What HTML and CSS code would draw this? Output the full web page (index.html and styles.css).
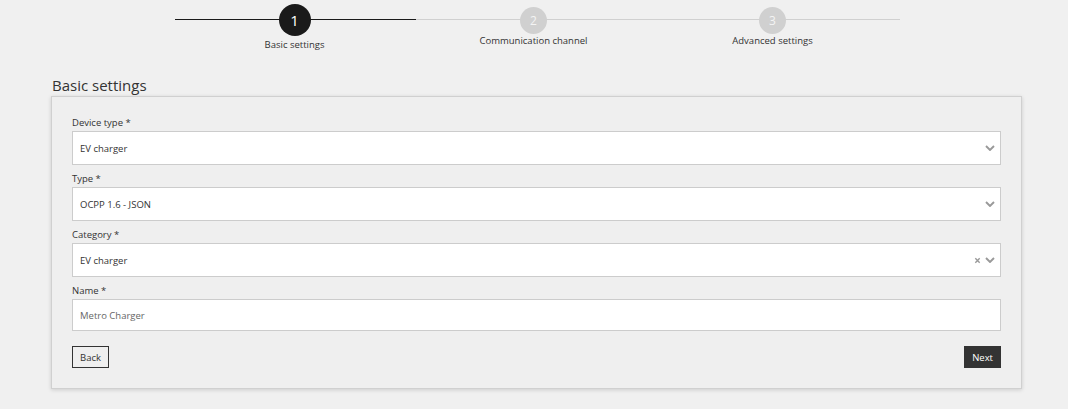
FILE: index.html
```html
<!DOCTYPE html>
<html>
<head>
<meta charset="utf-8">
<link rel="stylesheet" href="styles.css">
</head>
<body>
<div class="stepper">
  <div class="step done">
    <div class="line"></div>
    <div class="circle">1</div>
    <div class="step-label">Basic settings</div>
  </div>
  <div class="step">
    <div class="line"></div>
    <div class="circle">2</div>
    <div class="step-label">Communication channel</div>
  </div>
  <div class="step last">
    <div class="line"></div>
    <div class="circle">3</div>
    <div class="step-label">Advanced settings</div>
  </div>
</div>
<h2 class="title">Basic settings</h2>
<div class="card">
  <div class="field">
    <label>Device type *</label>
    <div class="input select"><span>EV charger</span><span class="icons"><svg class="chev" viewBox="0 0 10 6"><path d="M1 1 L5 5 L9 1" /></svg></span></div>
  </div>
  <div class="field">
    <label>Type *</label>
    <div class="input select"><span>OCPP 1.6 - JSON</span><span class="icons"><svg class="chev" viewBox="0 0 10 6"><path d="M1 1 L5 5 L9 1" /></svg></span></div>
  </div>
  <div class="field">
    <label>Category *</label>
    <div class="input select"><span>EV charger</span><span class="icons"><svg class="clear" viewBox="0 0 8 8"><path d="M1.5 1.5 L6.5 6.5 M6.5 1.5 L1.5 6.5" /></svg><svg class="chev" viewBox="0 0 10 6"><path d="M1 1 L5 5 L9 1" /></svg></span></div>
  </div>
  <div class="field">
    <label>Name *</label>
    <div class="input text"><span>Metro Charger</span></div>
  </div>
  <div class="actions">
    <button class="btn back">Back</button>
    <button class="btn next">Next</button>
  </div>
</div>
</body>
</html>
```
FILE: styles.css
```css
* { box-sizing: border-box; }
body {
  margin: 0;
  background: #f0f0f0;
  font-family: "Open Sans", "DejaVu Sans", sans-serif;
  color: #333;
  height: 409px;
  overflow: hidden;
}
.stepper {
  display: flex;
  margin: 4px 0 0 175px;
}
.step {
  width: 239px;
  position: relative;
  display: flex;
  flex-direction: column;
  align-items: center;
}
.step .line {
  position: absolute;
  left: 0; right: 0;
  top: 15px;
  height: 1px;
  background: #d0d0d0;
}
.step.last .line { right: -8px; }
.step.done .line { background: #1a1a1a; right: -2px; z-index: 1; }
.circle {
  position: relative;
  z-index: 2;
  width: 27px;
  height: 27px;
  border-radius: 50%;
  background: #d0d0d0;
  color: #f4f4f4;
  font-size: 12px;
  display: flex;
  align-items: center;
  justify-content: center;
  margin-top: 3px;
}
.step.done .circle {
  width: 32px;
  height: 32px;
  margin-top: 0;
  background: #1a1a1a;
  color: #fff;
  font-size: 15px;
}
.step-label {
  font-size: 9.5px;
  margin-top: 2px;
  color: #333;
}
.step:not(.done) .step-label { margin-top: 0; }
.title {
  font-weight: 400;
  font-size: 15px;
  margin: 24px 0 0 52px;
  color: #333;
  line-height: 21px;
}
.card {
  margin: 0 46px 0 51px;
  border: 1px solid #d0d0d0;
  box-shadow: 0 1px 4px rgba(0,0,0,0.15);
  padding: 20px 20px 18px 20px;
  background: #efefef;
  height: 293px;
}
.field { margin-bottom: 8px; }
.field label {
  display: block;
  font-size: 9.5px;
  line-height: 12px;
  margin-bottom: 2px;
  color: #333;
}
.input {
  height: 34px;
  background: #fff;
  border: 1px solid #ccc;
  display: flex;
  align-items: center;
  justify-content: space-between;
  padding: 0 5px 0 7px;
  font-size: 9.5px;
  color: #333;
}
.input.text { height: 32px; color: #666; }
.icons { display: flex; align-items: center; gap: 4px; }
.chev { width: 10px; height: 6px; }
.chev path { fill: none; stroke: #999; stroke-width: 1.9; }
.clear { width: 7px; height: 7px; }
.clear path { fill: none; stroke: #999; stroke-width: 1.6; }
.actions {
  display: flex;
  justify-content: space-between;
  margin-top: 15px;
}
.btn {
  font-family: inherit;
  font-size: 9.5px;
  height: 22px;
  padding: 0 7px;
  border-radius: 0;
}
.back { background: transparent; border: 1px solid #333; color: #333; }
.next { background: #333; border: 1px solid #333; color: #fff; }
```
